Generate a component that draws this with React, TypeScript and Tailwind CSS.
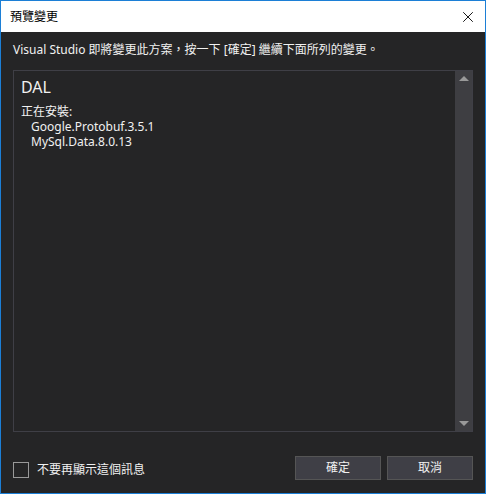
import { X } from "lucide-react";

export default function App() {
  const font = { fontFamily: '"Noto Sans", "Noto Sans CJK TC", sans-serif' };

  return (
    <div className="w-[486px] h-[494px] border border-[#1c7fd6] bg-[#252526] flex flex-col overflow-hidden" style={font}>
      {/* title bar */}
      <div className="h-[31px] bg-white flex items-center justify-between pl-[9px] pr-[8px] shrink-0">
        <span className="text-[12px] text-black">預覽變更</span>
        <X size={18} strokeWidth={1.2} className="text-black" />
      </div>

      <div className="flex-1 flex flex-col px-[12px]">
        <p className="text-[12px] text-[#f1f1f1] mt-[9px] h-[18px] leading-[18px]">
          Visual Studio 即將變更此方案，按一下 [確定] 繼續下面所列的變更。
        </p>

        {/* changes list */}
        <div className="mt-[11px] h-[362px] border border-[#3f3f46] flex">
          <div className="flex-1 pl-[7px] pt-[5px] text-[#f1f1f1]">
            <div className="text-[16px] leading-[22px]">DAL</div>
            <div className="text-[12px] leading-[15px] mt-[6px]">正在安裝:</div>
            <div className="text-[12px] leading-[15px] pl-[10px]">Google.Protobuf.3.5.1</div>
            <div className="text-[12px] leading-[15px] pl-[10px]">MySql.Data.8.0.13</div>
          </div>
          <div className="w-[17px] bg-[#3e3e42] flex flex-col justify-between items-center py-[5px]">
            <div className="w-0 h-0 border-l-[5px] border-r-[5px] border-b-[5px] border-l-transparent border-r-transparent border-b-[#999999]" />
            <div className="w-0 h-0 border-l-[5px] border-r-[5px] border-t-[5px] border-l-transparent border-r-transparent border-t-[#999999]" />
          </div>
        </div>

        {/* footer */}
        <div className="mt-[24px] flex items-center justify-between">
          <label className="flex items-center gap-[8px] mt-[4px]">
            <span className="w-[16px] h-[16px] border border-[#999999]" />
            <span className="text-[12px] text-[#f1f1f1]">不要再顯示這個訊息</span>
          </label>
          <div className="flex gap-[6px]">
            <button className="w-[86px] h-[24px] bg-[#3f3f46] border border-[#555555] text-[12px] text-[#f1f1f1]">確定</button>
            <button className="w-[86px] h-[24px] bg-[#3f3f46] border border-[#555555] text-[12px] text-[#f1f1f1]">取消</button>
          </div>
        </div>
      </div>
    </div>
  );
}
